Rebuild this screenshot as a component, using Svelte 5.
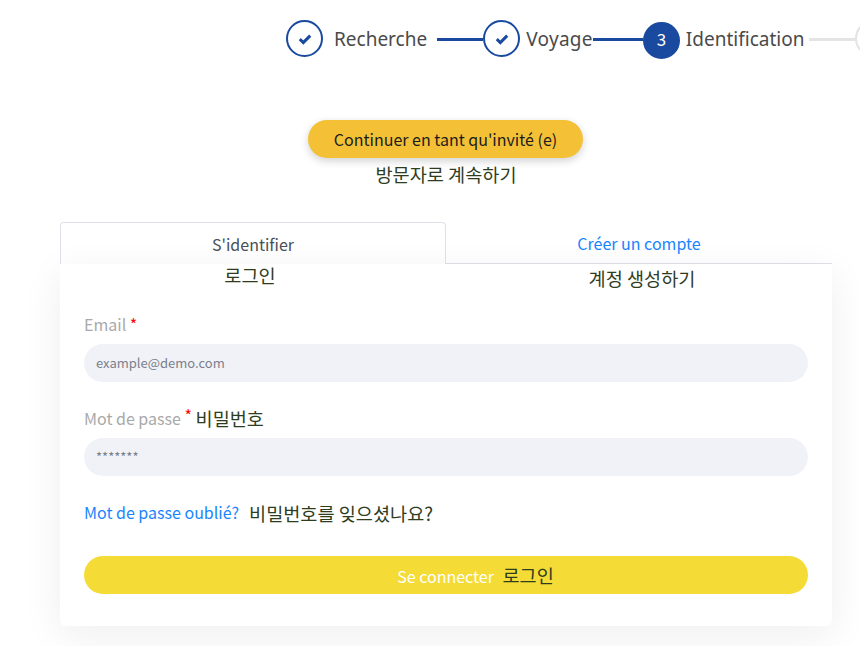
<script>
	const steps = [
		{ label: 'Recherche', state: 'done', line: 'blue' },
		{ label: 'Voyage', state: 'done', line: 'blue' },
		{ label: 'Identification', state: 'current', number: 3, line: 'grey' }
	];
</script>

<div class="page">
	<nav class="stepper">
		{#each steps as step, i}
			<div class="step step-{i}">
				{#if step.state === 'done'}
					<span class="circle">
						<svg width="14" height="12" viewBox="0 0 14 12">
							<path d="M1.8 6.2 5.3 9.6 12.2 2.6" fill="none" stroke="#1a4a9f" stroke-width="3" />
						</svg>
					</span>
				{:else}
					<span class="circle current">{step.number}</span>
				{/if}
				<span class="step-label">{step.label}</span>
				<span class="line {step.line}"></span>
			</div>
		{/each}
		<span class="circle upcoming"></span>
	</nav>

	<div class="guest">
		<button class="guest-btn">Continuer en tant qu'invité (e)</button>
		<p class="ko guest-ko">방문자로 계속하기</p>
	</div>

	<div class="tabs">
		<div class="tab active">S'identifier</div>
		<div class="tab link">Créer un compte</div>
	</div>

	<form class="card">
		<div class="tab-ko">
			<span class="ko first">로그인</span>
			<span class="ko second">계정 생성하기</span>
		</div>

		<div class="field email">
			<div class="label">Email <b>*</b></div>
			<input type="text" placeholder="example@demo.com" />
		</div>

		<div class="field password">
			<div class="label">Mot de passe <b class="up">*</b> <span class="ko">비밀번호</span></div>
			<input type="text" placeholder="*******" />
		</div>

		<div class="forgot">
			<span class="link-text">Mot de passe oublié?</span>
			<span class="ko">비밀번호를 잊으셨나요?</span>
		</div>

		<button type="button" class="submit">Se connecter <span class="ko">로그인</span></button>
	</form>
</div>

<style>
	:global(body) {
		margin: 0;
		background: #fff;
		overflow: hidden;
	}

	.page {
		width: 860px;
		height: 646px;
		overflow: hidden;
		font-family: 'Noto Sans CJK KR', 'Noto Sans', sans-serif;
		font-size: 16px;
		color: #3e4650;
	}

	.ko {
		font-family: 'Noto Sans CJK KR', sans-serif;
		font-size: 18.6px;
		color: #2f3d1f;
	}

	.stepper {
		display: flex;
		align-items: center;
		height: 37px;
		padding: 20px 0 0 286px;
		width: 700px;
		font-family: 'Noto Sans', sans-serif;
		font-size: 19px;
		color: #4a4a4a;
	}

	.step {
		display: flex;
		align-items: center;
		flex: none;
	}

	.circle {
		flex: none;
		box-sizing: border-box;
		display: flex;
		align-items: center;
		justify-content: center;
		width: 37px;
		height: 37px;
		border: 2px solid #1a4a9f;
		border-radius: 50%;
		background: #fff;
	}

	.circle.current {
		margin-top: 3px;
		padding-bottom: 3px;
		background: #1a4a9f;
		color: #fff;
		font-family: 'Noto Sans CJK KR', sans-serif;
		font-size: 17px;
	}

	.circle.upcoming {
		border-color: #e4e4e4;
	}

	.step-0 .step-label {
		margin: 0 10px 0 11px;
	}

	.step-1 .step-label {
		margin-left: 6px;
		letter-spacing: 0.3px;
	}

	.step-2 .step-label {
		margin: 0 5px 0 6px;
	}

	.line {
		height: 3px;
		width: 46px;
		margin-top: 1px;
	}

	.line.blue {
		background: #1a4a9f;
	}

	.line.grey {
		background: #e4e4e4;
	}

	.step-1 .line {
		width: 50px;
	}

	.guest {
		display: flex;
		flex-direction: column;
		align-items: center;
		width: 890px;
		margin-top: 63px;
	}

	.guest-btn {
		width: 275px;
		height: 38px;
		padding: 0 0 0 1px;
		border: none;
		border-radius: 19px;
		background: #f4c136;
		box-shadow: 0 3px 8px rgba(0, 0, 0, 0.18);
		font: inherit;
		color: #1c1c1c;
	}

	.guest-ko {
		margin: 2px 0 0 2px;
		line-height: 27px;
	}

	.tabs {
		display: grid;
		grid-template-columns: 386px 386px;
		margin: 35px 0 0 60px;
		height: 42px;
	}

	.tab {
		box-sizing: border-box;
		display: flex;
		align-items: center;
		justify-content: center;
		border-bottom: 1px solid #dee2e6;
	}

	.tab.active {
		border: 1px solid #dee2e6;
		border-bottom: none;
		border-radius: 4px 4px 0 0;
		color: #495057;
	}

	.tab.link {
		color: #1a84ff;
	}

	.card {
		box-sizing: border-box;
		width: 772px;
		height: 362px;
		margin-left: 60px;
		padding: 0 24px;
		background: #fff;
		border-radius: 0 0 6px 6px;
		box-shadow: 0 10px 40px rgba(30, 30, 60, 0.07);
		position: relative;
	}

	.tab-ko {
		display: grid;
		grid-template-columns: 362px 362px;
		line-height: 27px;
		text-align: center;
	}

	.tab-ko .first {
		margin: -3px 0 0 -30px;
	}

	.tab-ko .second {
		margin-left: 30px;
	}

	.label {
		height: 24px;
		line-height: 24px;
		color: #a9a9a9;
	}

	.label b {
		font-weight: 400;
		color: #ff0000;
	}

	.label b.up {
		position: relative;
		top: -3px;
	}

	.label .ko {
		vertical-align: -1px;
	}

	.field {
		display: flex;
		flex-direction: column;
		gap: 8px;
	}

	.email {
		padding-top: 21px;
	}

	.password {
		padding-top: 24px;
	}

	input {
		box-sizing: border-box;
		width: 100%;
		height: 38px;
		padding: 0 12px 2px;
		border: none;
		border-radius: 19px;
		background: #f1f2f7;
		font: inherit;
		font-size: 13px;
	}

	input::placeholder {
		color: #7a7f8c;
		opacity: 1;
	}

	.forgot {
		display: flex;
		gap: 10px;
		align-items: center;
		margin-top: 23px;
		height: 26px;
	}

	.link-text {
		color: #1a84ff;
	}

	.submit {
		display: block;
		width: 100%;
		height: 38px;
		margin-top: 31px;
		padding: 0 0 2px 59px;
		border: none;
		border-radius: 19px;
		background: #f4db36;
		font: inherit;
		color: #fff;
	}

	.submit .ko {
		margin-left: 5px;
	}
</style>
